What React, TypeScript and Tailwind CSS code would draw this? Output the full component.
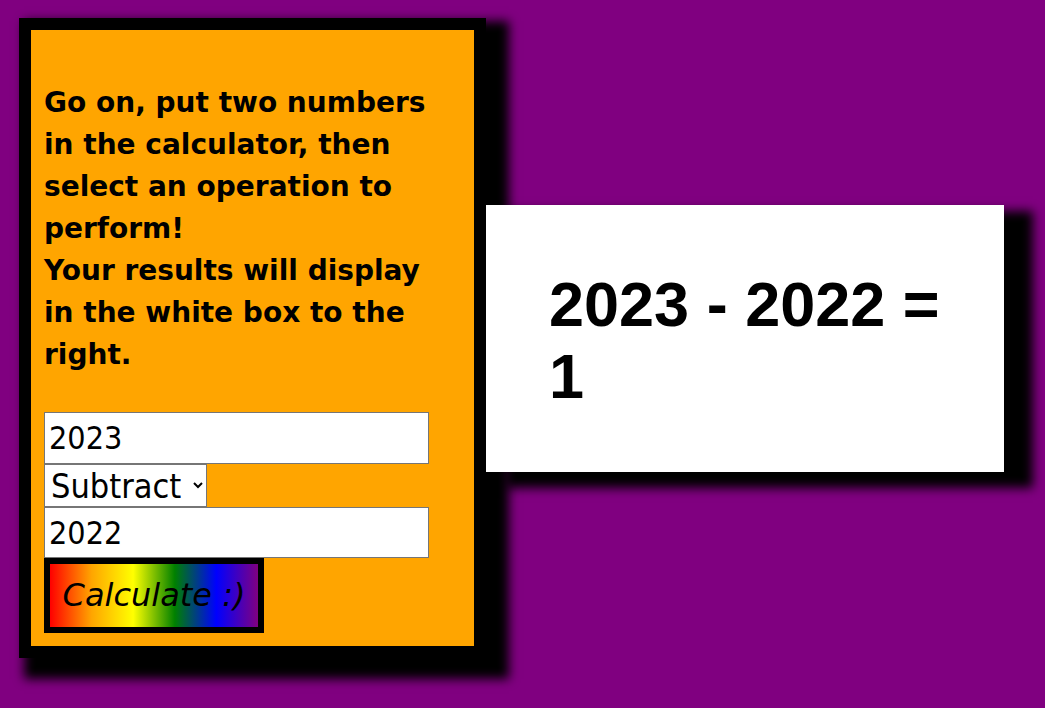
import { useState } from 'react';

export default function App() {
  const [first, setFirst] = useState('2023');
  const [op, setOp] = useState('subtract');
  const [second, setSecond] = useState('2022');

  // Resultado fijo para la captura: 2023 - 2022 = 1
  const symbol = op === 'add' ? '+' : op === 'multiply' ? '*' : op === 'divide' ? '/' : '-';
  const a = Number(first);
  const b = Number(second);
  const result =
    op === 'add' ? a + b : op === 'multiply' ? a * b : op === 'divide' ? a / b : a - b;

  return (
    <div className="min-h-screen bg-[#800080] pt-[18px] pl-[19px]">
      <div className="flex items-center">
        {/* Panel naranja con el formulario */}
        <div className="w-[467px] shrink-0 border-[12px] border-black bg-[#ffa500] p-[13px] shadow-[14px_12px_10px_9px_#000]">
          <h2 className="mt-[39px] mb-[36px] w-[400px] font-['DejaVu_Sans',sans-serif] text-[28px] font-bold leading-[42px] text-black">
            Go on, put two numbers in the calculator, then select an operation to perform!
            <br />
            Your results will display in the white box to the right.
          </h2>

          <div className="flex flex-col items-start font-['DejaVu_Sans_Condensed','DejaVu_Sans',sans-serif] text-black">
            <input
              type="text"
              value={first}
              onChange={(e) => setFirst(e.target.value)}
              className="h-[52px] w-[385px] border border-[#767676] bg-white pl-[4px] pb-[1px] text-[32px] leading-[1.15] outline-none"
            />
            <select
              value={op}
              onChange={(e) => setOp(e.target.value)}
              className="h-[43px] w-[163px] border border-[#767676] bg-white pl-[2px] text-[34px] leading-[1.15]"
            >
              <option value="add">Add</option>
              <option value="subtract">Subtract</option>
              <option value="multiply">Multiply</option>
              <option value="divide">Divide</option>
            </select>
            <input
              type="text"
              value={second}
              onChange={(e) => setSecond(e.target.value)}
              className="h-[51px] w-[385px] border border-[#767676] bg-white pl-[4px] text-[32px] leading-[1.15] outline-none"
            />
            <button className="h-[75px] w-[220px] border-[6px] border-black bg-[linear-gradient(to_right,red,orange,yellow,green,blue,purple)] font-['DejaVu_Sans',sans-serif] text-[32px] leading-[1.15] italic text-black">
              Calculate :)
            </button>
          </div>
        </div>

        {/* Caja blanca con el resultado */}
        <div className="h-[267px] w-[518px] shrink-0 bg-white pt-[63px] pl-[63px] shadow-[24px_11px_10px_5px_#000]">
          <p className="font-['Liberation_Sans',Arial,sans-serif] text-[63px] font-bold leading-[1.149] text-black">
            {first} {symbol} {second} =
            <br />
            {result}
          </p>
        </div>
      </div>
    </div>
  );
}
